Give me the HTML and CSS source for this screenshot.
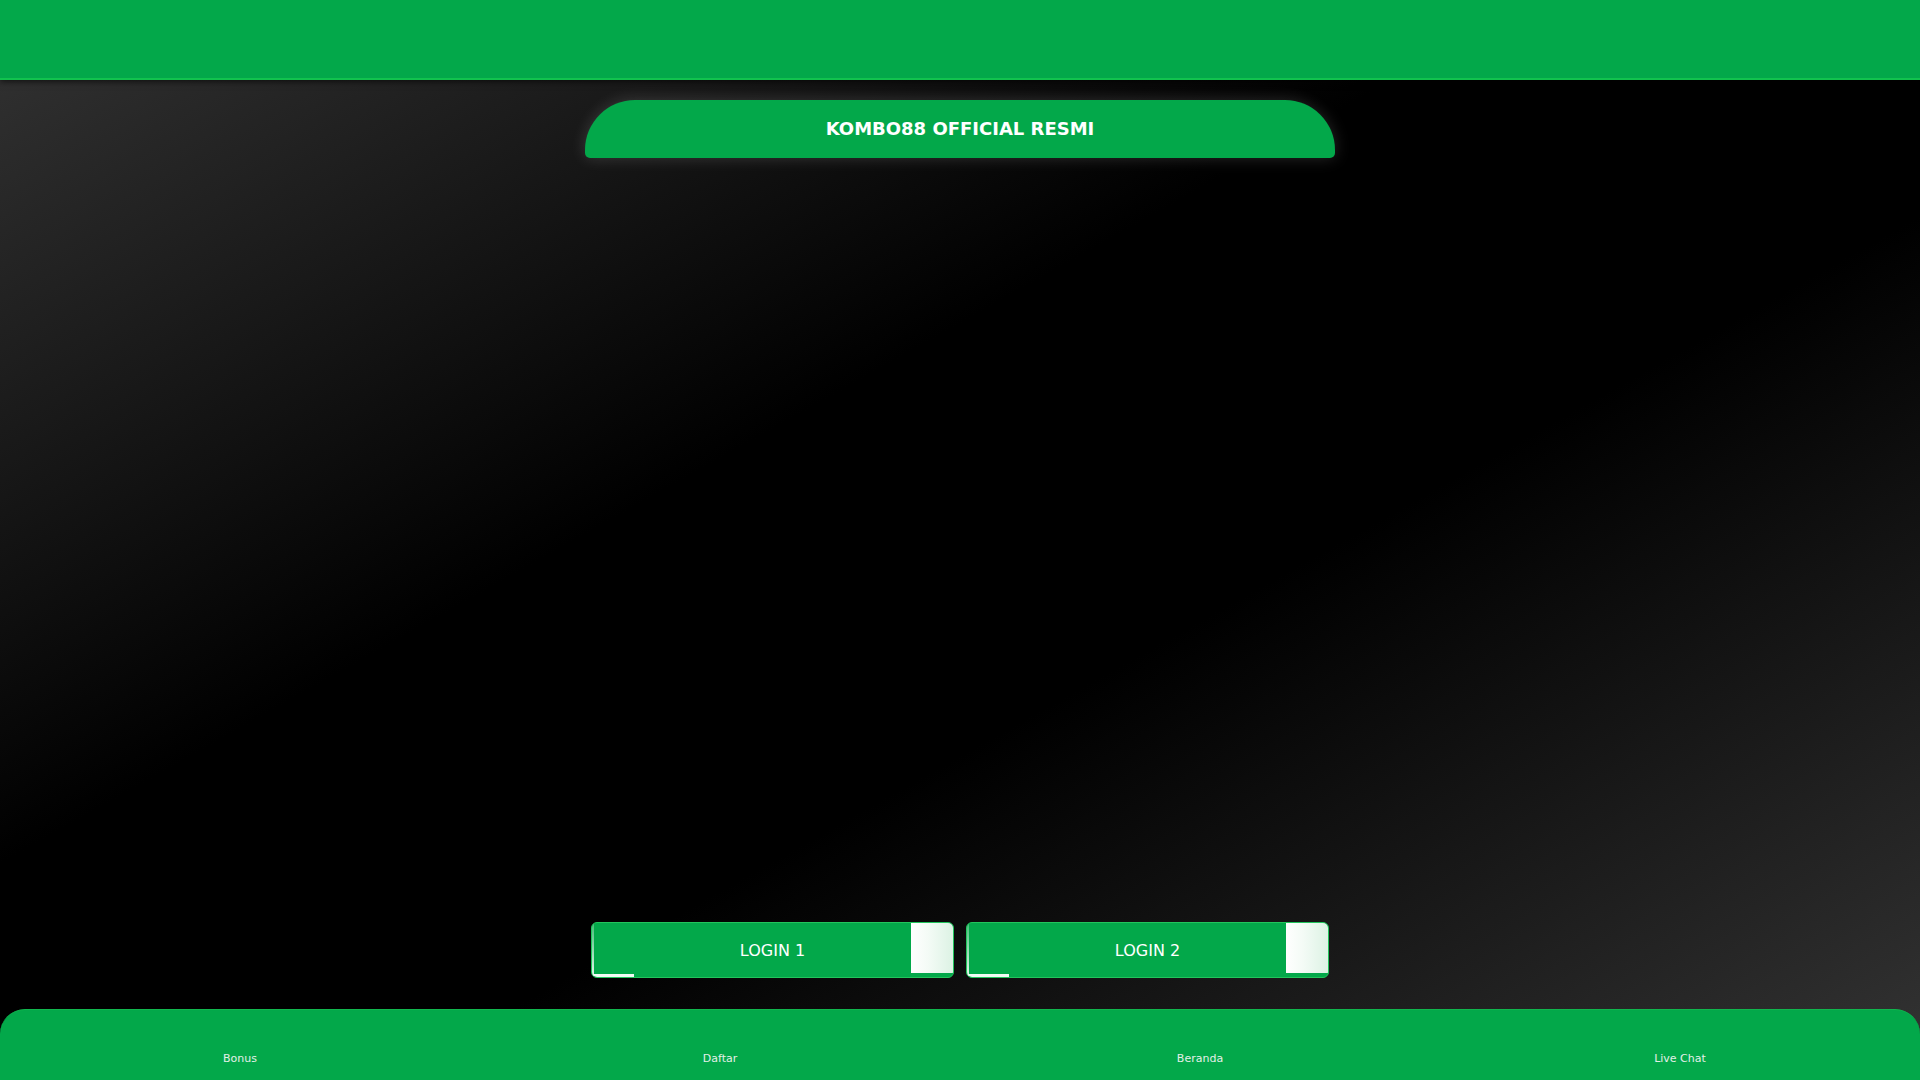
FILE: index.html
```html
<!DOCTYPE html>
<html lang="id">
<head>
<meta charset="utf-8">
<title>KOMBO88 OFFICIAL RESMI</title>
<link rel="stylesheet" href="styles.css">
</head>
<body>
  <header class="topbar"></header>
  <main class="wrap">
    <h1 class="title">KOMBO88 OFFICIAL RESMI</h1>
    <div class="banner"></div>
    <div class="logins">
      <a class="btn" href="#"><span class="edge-l"></span><span class="deco-tr"></span><span class="deco-bl"></span><span class="label">LOGIN 1</span></a>
      <a class="btn" href="#"><span class="edge-l"></span><span class="deco-tr"></span><span class="deco-bl"></span><span class="label">LOGIN 2</span></a>
    </div>
  </main>
  <nav class="bottomnav">
    <a class="navitem" href="#">Bonus</a>
    <a class="navitem" href="#">Daftar</a>
    <a class="navitem" href="#">Beranda</a>
    <a class="navitem" href="#">Live Chat</a>
  </nav>
</body>
</html>
```
FILE: styles.css
```css
* { box-sizing: border-box; }
html, body { margin: 0; padding: 0; }
body {
  min-height: 100vh;
  display: flex;
  flex-direction: column;
  font-family: "DejaVu Sans", "Liberation Sans", sans-serif;
  background: linear-gradient(to bottom right, #343434 0%, #000000 40%, #000000 60%, #343434 100%);
  background-attachment: fixed;
  color: #fff;
}
.topbar {
  height: 80px;
  background: #03a84a;
  border-bottom: 2px solid #12c24e;
  box-shadow: 0 2px 6px rgba(0, 0, 0, 0.6);
  flex: none;
}
.wrap {
  width: 750px;
  margin: 20px auto 0;
  display: flex;
  flex-direction: column;
}
.title {
  margin: 0;
  height: 58px;
  padding-bottom: 2px;
  display: flex;
  align-items: center;
  justify-content: center;
  background: #03a84a;
  border-radius: 50px 50px 5px 5px;
  box-shadow: 0 0 16px rgba(255, 255, 255, 0.16);
  font-size: 18px;
  font-weight: bold;
  letter-spacing: 0;
  color: #fff;
}
.banner {
  height: 736px;
  margin: 14px 7px;
}
.logins {
  display: flex;
  gap: 12px;
  padding: 0 6px;
}
.btn {
  position: relative;
  flex: 1;
  height: 56px;
  display: flex;
  align-items: center;
  justify-content: center;
  background: #03a84a;
  border: 1px solid #22c55c;
  border-radius: 6px;
  overflow: hidden;
  text-decoration: none;
  color: #fff;
}
.label {
  position: relative;
  font-size: 16px;
  color: #fff;
}
.edge-l {
  position: absolute;
  left: 0;
  top: 0;
  width: 2px;
  height: 100%;
  background: linear-gradient(to top, rgba(255,255,255,0.9), rgba(255,255,255,0.25));
}
.deco-tr {
  position: absolute;
  top: 0;
  right: 0;
  width: 42px;
  height: 50px;
  background: linear-gradient(to right, #ffffff 0%, #f4fbf6 40%, #dcf2e4 100%);
}
.deco-bl {
  position: absolute;
  left: 0;
  bottom: 0;
  width: 42px;
  height: 3px;
  background: #f2fbf5;
}
.bottomnav {
  margin-top: auto;
  height: 71px;
  flex: none;
  display: grid;
  grid-template-columns: repeat(4, 1fr);
  background: #03a84a;
  border-top: 1px solid #10b64e;
  border-radius: 25px 25px 0 0;
}
.navitem {
  display: flex;
  align-items: flex-end;
  justify-content: center;
  padding-bottom: 14px;
  font-size: 11px;
  line-height: 14px;
  color: #e4efe8;
  text-decoration: none;
}
```
